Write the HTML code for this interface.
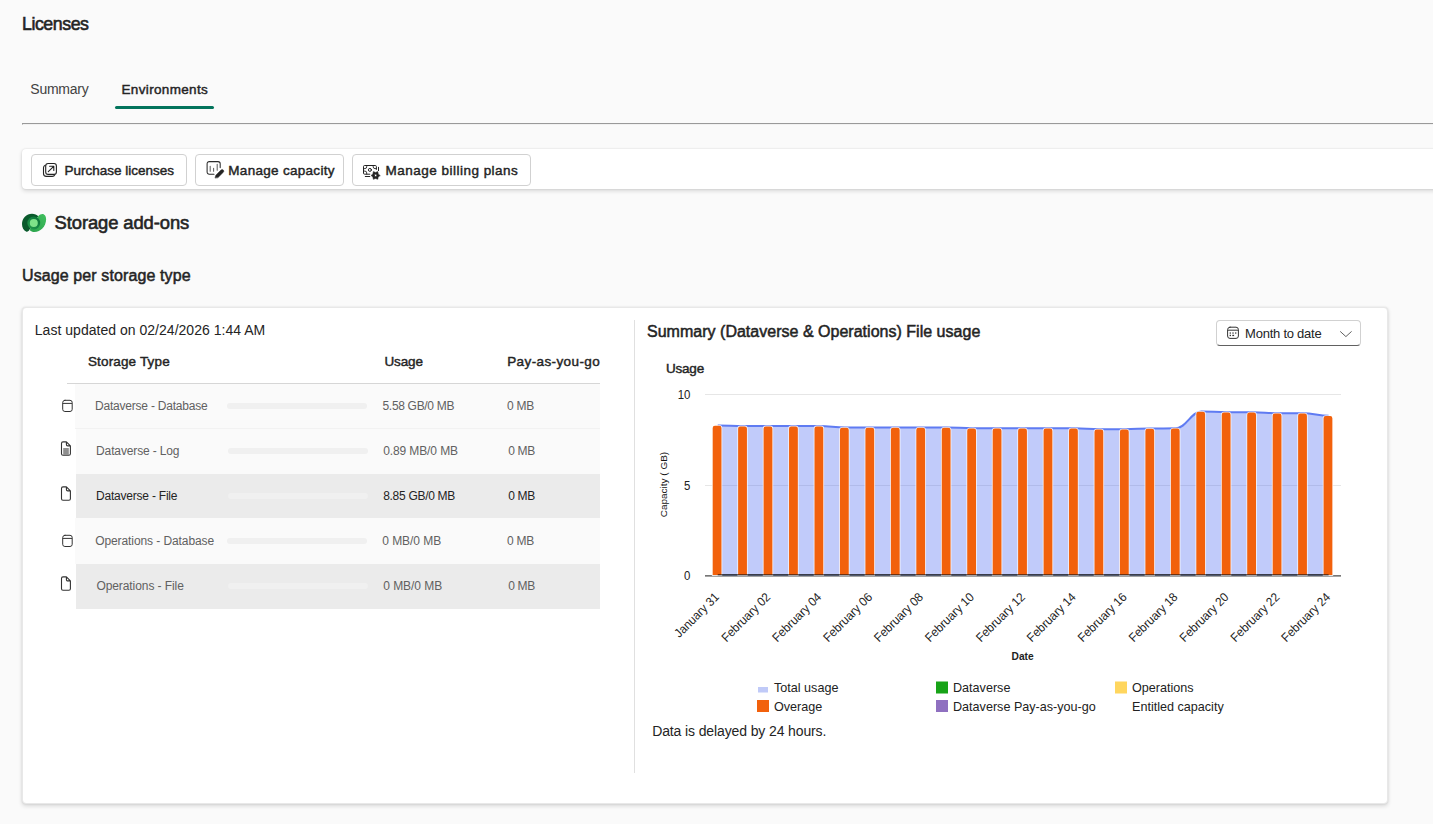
<!DOCTYPE html>
<html lang="en"><head><meta charset="utf-8"><title>Licenses</title>
<style>
html,body{margin:0;padding:0}
body{width:1433px;height:824px;overflow:hidden;background:#fafafa;position:relative;font-family:'Liberation Sans',sans-serif;color:#242424}
.a{position:absolute}
.t{position:absolute;margin:0;padding:0;font-weight:400;white-space:nowrap;transform-origin:0 50%;line-height:normal}
.tabline{left:115px;top:106px;width:99px;height:3px;border-radius:2px;background:#03745c}
.hr{left:22px;top:123px;width:1411px;height:0;border-top:1px solid #999;border-bottom:1px solid #f1f1f1;border-left:1px solid #999}
.toolbar{left:22px;top:149px;width:1420px;height:40px;background:#fff;border-radius:4px;box-shadow:0 0 2px rgba(0,0,0,.12),0 2px 4px rgba(0,0,0,.14)}
.btn{top:154px;height:30px;border:1px solid #d1d1d1;border-radius:4px;background:#fff}
.card{left:22px;top:307px;width:1364px;height:494.5px;border:1px solid #e8e8e8;background:#fff;border-radius:4px;box-shadow:0 0 2px rgba(0,0,0,.10),0 2px 4px rgba(0,0,0,.14)}
.vdiv{left:634px;top:320px;width:1px;height:453px;background:#e0e0e0}
.thline{left:67px;top:383px;width:533px;height:1px;background:#d6d6d6}
.row{height:45px;background:#fafafa}
.row.g{background:#ebebeb}
.pb{width:140px;height:6px;border-radius:3px;background:#f0f0f0}
.dd{left:1216px;top:320px;width:143px;height:24px;border:1px solid #d1d1d1;border-bottom-color:#616161;border-radius:4px;background:#fff}
svg{position:absolute;overflow:visible}
.sb{-webkit-text-stroke:.032em currentColor}

</style></head>
<body>
<div class="a tabline"></div>
<div class="a hr"></div>
<div class="a toolbar"></div>
<div class="a btn" style="left:31px;width:154px"></div>
<div class="a btn" style="left:195px;width:147px"></div>
<div class="a btn" style="left:352px;width:177px"></div>
<div class="a card"></div>
<div class="a vdiv"></div>
<div class="a thline"></div>
<div class="a row" style="left:75px;top:384px;width:525px"></div>
<div class="a row" style="left:76px;top:429px;width:524px"></div>
<div class="a row g" style="left:76px;top:474px;width:524px;height:44px"></div>
<div class="a row" style="left:75px;top:518px;width:525px;height:46px"></div>
<div class="a row g" style="left:76px;top:564px;width:524px;height:44.5px"></div>
<div class="a" style="left:75px;top:428px;width:525px;height:1px;background:#f2f2f2"></div>
<div class="a pb" style="left:227px;top:403px"></div>
<div class="a pb" style="left:228px;top:448px"></div>
<div class="a pb" style="left:228px;top:493px"></div>
<div class="a pb" style="left:227px;top:538px"></div>
<div class="a pb" style="left:228px;top:583px"></div>
<div class="a dd"></div>

<svg class="a" style="left:0;top:0" width="1433" height="824" viewBox="0 0 1433 824" fill="none" stroke-linecap="round" stroke-linejoin="round">
<!-- Dataverse logo -->
<defs>
<linearGradient id="dvr" x1="0" y1="1" x2="1" y2="0"><stop offset="0" stop-color="#27a04d"/><stop offset=".55" stop-color="#148342"/><stop offset="1" stop-color="#0d7037"/></linearGradient>
<linearGradient id="dvl" x1="0" y1="1" x2="1" y2="0"><stop offset="0" stop-color="#2aa24c"/><stop offset="1" stop-color="#40bf5e"/></linearGradient>
</defs>
<g>
<path d="M26.4 231.7C23.6 230.6 22 227.6 22 224C22 218.4 26.4 213.8 32 213.8C34.6 213.8 36.9 214.8 38.4 216.5L36 219L29.6 229.6C28.9 231.1 27.7 232 26.4 231.7Z" fill="#0a5a2c"/>
<path d="M38.6 215.8C39.6 214.6 41 213.9 42.4 213.9C44.6 213.9 46.1 216.2 46.1 219.2C46.1 226.2 40.6 232 34.4 232C32.5 232 30.9 231.4 29.9 230.2L31 226L38.6 215.8Z" fill="url(#dvl)"/>
<circle cx="33.8" cy="223" r="6.4" fill="url(#dvr)"/>
<circle cx="33.8" cy="222.9" r="4" fill="#7fe389"/>
</g>
<!-- Purchase licenses icon -->
<g stroke="#242424" stroke-width="1.1">
<rect x="45.7" y="163.5" width="10.7" height="10.9" rx="2.4"/>
<path d="M45.2 165.2C44.2 165.6 43.5 166.5 43.5 167.7V173.6A2.8 2.8 0 0 0 46.3 176.4H52.3C53.5 176.4 54.4 175.7 54.8 174.7"/>
<path d="M48.3 171.6L53.7 166.3M49.6 166.2H53.8V170.5"/>
</g>
<!-- Manage capacity icon -->
<g stroke="#2b2b2b" stroke-width="1.05">
<path d="M214 174.2H209.3A2.2 2.2 0 0 1 207.1 172V163.8A2.2 2.2 0 0 1 209.3 161.6H218A2.2 2.2 0 0 1 220.2 163.8V167.6"/>
<path d="M210.2 166.3V171.3M213.6 168.3V171.3M217.2 164.3V170.3" stroke="#616161"/>
</g>
<path d="M215.1 177.7L215.8 175.2L221 170A1.6 1.6 0 0 1 223.3 172.3L218.1 177.5Z" fill="#242424" stroke="#242424" stroke-width=".5"/>
<!-- Manage billing plans icon -->
<g stroke="#242424" stroke-width="1">
<path d="M369.8 174.2H364.6A1.1 1.1 0 0 1 363.5 173.1V166.6A1.1 1.1 0 0 1 364.6 165.5H375.3A1.1 1.1 0 0 1 376.4 166.6V169.4"/>
<path d="M366.7 165.6V166.8A1.8 1.8 0 0 1 364.9 168.6H363.6M373.2 165.6V166.8A1.8 1.8 0 0 0 375 168.6H376.3M363.6 171.1H364.9A1.8 1.8 0 0 1 366.7 172.9V174.1" stroke-width=".9"/>
<circle cx="369.9" cy="169.9" r="1.5"/>
<path d="M365.3 176.5H369.8M378.5 167.3V170.6"/>
</g>
<path d="M380.05 175.45L378.19 173.92L377.80 171.55L375.55 172.40L373.30 171.55L372.91 173.92L371.05 175.45L372.91 176.97L373.30 179.35L375.55 178.50L377.80 179.35L378.19 176.97ZM374.40 175.45a1.15 1.15 0 1 0 2.3 0a1.15 1.15 0 1 0 -2.3 0Z" fill="#242424" fill-rule="evenodd" stroke="#242424" stroke-width=".5" stroke-linejoin="round"/>
<!-- row icons -->
<g stroke="#333" stroke-width="1">
<rect x="62.7" y="400.3" width="9.5" height="11.2" rx="2.2"/><path d="M62.9 403.4H72" stroke-linecap="butt"/>
<rect x="62.7" y="535.3" width="9.5" height="11.2" rx="2.2"/><path d="M62.9 538.4H72" stroke-linecap="butt"/>
</g>
<g stroke="#333" stroke-width="1.1">
<path id="doc" d="M66.4 441.9H63A1.5 1.5 0 0 0 61.5 443.4V453.7A1.5 1.5 0 0 0 63 455.2H68.9A1.5 1.5 0 0 0 70.4 453.7V445.9L66.4 441.9V444.6A1.3 1.3 0 0 0 67.7 445.9H70.2"/>
<path d="M66.4 486.9H63A1.5 1.5 0 0 0 61.5 488.4V498.7A1.5 1.5 0 0 0 63 500.2H68.9A1.5 1.5 0 0 0 70.4 498.7V490.9L66.4 486.9V489.6A1.3 1.3 0 0 0 67.7 490.9H70.2"/>
<path d="M66.4 576.9H63A1.5 1.5 0 0 0 61.5 578.4V588.7A1.5 1.5 0 0 0 63 590.2H68.9A1.5 1.5 0 0 0 70.4 588.7V580.9L66.4 576.9V579.6A1.3 1.3 0 0 0 67.7 580.9H70.2"/>
</g>
<rect x="63.2" y="448" width="5.6" height="7" fill="#8f8f8f"/>
<!-- dropdown icons -->
<g stroke="#333" stroke-width="1">
<rect x="1227.6" y="327.2" width="10.8" height="11.2" rx="2.4"/><path d="M1227.8 330.2H1238.2" stroke-linecap="butt"/>
</g>
<g fill="#616161"><rect x="1229.6" y="332.3" width="1.4" height="1.5"/><rect x="1232.3" y="332.3" width="1.4" height="1.5"/><rect x="1235" y="332.3" width="1.4" height="1.5"/><rect x="1229.6" y="334.8" width="1.4" height="1.3" fill="#333"/><rect x="1232.3" y="334.8" width="1.8" height="1.3" fill="#333"/></g>
<path d="M1340.2 331.4L1345.9 336.6L1351.6 331.4" stroke="#616161" stroke-width="1" stroke-linecap="butt" stroke-linejoin="miter"/>
</svg>

<svg class="a" style="left:0;top:0" width="1433" height="824" viewBox="0 0 1433 824" font-family="'Liberation Sans', Arial, sans-serif">
<g stroke="#e6e6e6" stroke-width="1"><path d="M705.0 394.5H1341.0M705.0 485.5H1341.0"/></g>
<path d="M717.73 425.40C727.91 425.40 733.00 426.10 743.18 426.10H768.63H794.09H819.54C829.72 426.10 834.82 427.40 845.00 427.40H870.45H895.90H921.36H946.81C956.99 427.40 962.09 428.30 972.27 428.30H997.72H1023.17H1048.63H1074.08C1084.26 428.30 1089.36 429.20 1099.54 429.20H1124.99C1135.17 429.20 1140.26 428.50 1150.44 428.50C1160.63 428.50 1165.72 428.30 1175.90 428.30C1186.08 428.30 1191.17 411.40 1201.35 411.40C1211.53 411.40 1216.63 412.30 1226.81 412.30H1252.26C1262.44 412.30 1267.53 413.20 1277.72 413.20H1303.17C1313.35 413.20 1318.44 415.70 1328.62 415.70V575.5H717.73Z" fill="#5470f0" fill-opacity=".36"/>
<path d="M717.73 425.40C727.91 425.40 733.00 426.10 743.18 426.10H768.63H794.09H819.54C829.72 426.10 834.82 427.40 845.00 427.40H870.45H895.90H921.36H946.81C956.99 427.40 962.09 428.30 972.27 428.30H997.72H1023.17H1048.63H1074.08C1084.26 428.30 1089.36 429.20 1099.54 429.20H1124.99C1135.17 429.20 1140.26 428.50 1150.44 428.50C1160.63 428.50 1165.72 428.30 1175.90 428.30C1186.08 428.30 1191.17 411.40 1201.35 411.40C1211.53 411.40 1216.63 412.30 1226.81 412.30H1252.26C1262.44 412.30 1267.53 413.20 1277.72 413.20H1303.17C1313.35 413.20 1318.44 415.70 1328.62 415.70" fill="none" stroke="#5f7bf2" stroke-width="2" stroke-linejoin="round"/>
<path d="M705.0 575.9H1341.0" stroke="#4a4a4a" stroke-width="1.1"/>
<path d="M717.73 574.9H1328.62" stroke="#677ea1" stroke-width="1.8"/>
<path d="M712.68 575.1V427.90a2.2 2.2 0 0 1 2.2 -2.2h4.4a2.2 2.2 0 0 1 2.2 2.2V575.1ZM738.13 575.1V428.60a2.2 2.2 0 0 1 2.2 -2.2h4.4a2.2 2.2 0 0 1 2.2 2.2V575.1ZM763.59 575.1V428.60a2.2 2.2 0 0 1 2.2 -2.2h4.4a2.2 2.2 0 0 1 2.2 2.2V575.1ZM789.04 575.1V428.60a2.2 2.2 0 0 1 2.2 -2.2h4.4a2.2 2.2 0 0 1 2.2 2.2V575.1ZM814.49 575.1V428.60a2.2 2.2 0 0 1 2.2 -2.2h4.4a2.2 2.2 0 0 1 2.2 2.2V575.1ZM839.95 575.1V429.90a2.2 2.2 0 0 1 2.2 -2.2h4.4a2.2 2.2 0 0 1 2.2 2.2V575.1ZM865.40 575.1V429.90a2.2 2.2 0 0 1 2.2 -2.2h4.4a2.2 2.2 0 0 1 2.2 2.2V575.1ZM890.86 575.1V429.90a2.2 2.2 0 0 1 2.2 -2.2h4.4a2.2 2.2 0 0 1 2.2 2.2V575.1ZM916.31 575.1V429.90a2.2 2.2 0 0 1 2.2 -2.2h4.4a2.2 2.2 0 0 1 2.2 2.2V575.1ZM941.76 575.1V429.90a2.2 2.2 0 0 1 2.2 -2.2h4.4a2.2 2.2 0 0 1 2.2 2.2V575.1ZM967.22 575.1V430.80a2.2 2.2 0 0 1 2.2 -2.2h4.4a2.2 2.2 0 0 1 2.2 2.2V575.1ZM992.67 575.1V430.80a2.2 2.2 0 0 1 2.2 -2.2h4.4a2.2 2.2 0 0 1 2.2 2.2V575.1ZM1018.12 575.1V430.80a2.2 2.2 0 0 1 2.2 -2.2h4.4a2.2 2.2 0 0 1 2.2 2.2V575.1ZM1043.58 575.1V430.80a2.2 2.2 0 0 1 2.2 -2.2h4.4a2.2 2.2 0 0 1 2.2 2.2V575.1ZM1069.03 575.1V430.80a2.2 2.2 0 0 1 2.2 -2.2h4.4a2.2 2.2 0 0 1 2.2 2.2V575.1ZM1094.49 575.1V431.70a2.2 2.2 0 0 1 2.2 -2.2h4.4a2.2 2.2 0 0 1 2.2 2.2V575.1ZM1119.94 575.1V431.70a2.2 2.2 0 0 1 2.2 -2.2h4.4a2.2 2.2 0 0 1 2.2 2.2V575.1ZM1145.39 575.1V431.00a2.2 2.2 0 0 1 2.2 -2.2h4.4a2.2 2.2 0 0 1 2.2 2.2V575.1ZM1170.85 575.1V430.80a2.2 2.2 0 0 1 2.2 -2.2h4.4a2.2 2.2 0 0 1 2.2 2.2V575.1ZM1196.30 575.1V413.90a2.2 2.2 0 0 1 2.2 -2.2h4.4a2.2 2.2 0 0 1 2.2 2.2V575.1ZM1221.76 575.1V414.80a2.2 2.2 0 0 1 2.2 -2.2h4.4a2.2 2.2 0 0 1 2.2 2.2V575.1ZM1247.21 575.1V414.80a2.2 2.2 0 0 1 2.2 -2.2h4.4a2.2 2.2 0 0 1 2.2 2.2V575.1ZM1272.67 575.1V415.70a2.2 2.2 0 0 1 2.2 -2.2h4.4a2.2 2.2 0 0 1 2.2 2.2V575.1ZM1298.12 575.1V415.70a2.2 2.2 0 0 1 2.2 -2.2h4.4a2.2 2.2 0 0 1 2.2 2.2V575.1ZM1323.57 575.1V418.20a2.2 2.2 0 0 1 2.2 -2.2h4.4a2.2 2.2 0 0 1 2.2 2.2V575.1Z" fill="#f2610c" stroke="#fff" stroke-opacity=".8" stroke-width="1.6" paint-order="stroke"/>
<path d="M717.73 574.7H1328.62" stroke="#1c1010" stroke-opacity=".6" stroke-width="1.5"/>
<g font-size="13" fill="#222" text-anchor="end">
<text transform="translate(690.4 399.2) scale(.88 1)">10</text>
<text transform="translate(690.4 489.7) scale(.88 1)">5</text>
<text transform="translate(690.4 580.2) scale(.88 1)">0</text>
</g>
<text transform="translate(667.3 484.6) rotate(-90) scale(1 .93)" text-anchor="middle" font-size="10" fill="#151515">Capacity ( GB)</text>
<g font-size="12.4" fill="#222" text-anchor="end">
<text transform="translate(719.83 597.8) rotate(-45) scale(0.935 1)">January 31</text>
<text transform="translate(771.24 597.8) rotate(-45) scale(0.95 1)">February 02</text>
<text transform="translate(822.14 597.8) rotate(-45) scale(0.95 1)">February 04</text>
<text transform="translate(873.05 597.8) rotate(-45) scale(0.95 1)">February 06</text>
<text transform="translate(923.96 597.8) rotate(-45) scale(0.95 1)">February 08</text>
<text transform="translate(974.87 597.8) rotate(-45) scale(0.95 1)">February 10</text>
<text transform="translate(1025.77 597.8) rotate(-45) scale(0.95 1)">February 12</text>
<text transform="translate(1076.68 597.8) rotate(-45) scale(0.95 1)">February 14</text>
<text transform="translate(1127.59 597.8) rotate(-45) scale(0.95 1)">February 16</text>
<text transform="translate(1178.50 597.8) rotate(-45) scale(0.95 1)">February 18</text>
<text transform="translate(1229.41 597.8) rotate(-45) scale(0.95 1)">February 20</text>
<text transform="translate(1280.32 597.8) rotate(-45) scale(0.95 1)">February 22</text>
<text transform="translate(1331.22 597.8) rotate(-45) scale(0.95 1)">February 24</text>
</g>
<text x="1022.6" y="660.3" text-anchor="middle" font-size="10.2" font-weight="bold" fill="#222">Date</text>
<rect x="758" y="687" width="10" height="5.5" fill="#c0caf8"/>
<rect x="757" y="700" width="12" height="12" fill="#f2610c"/>
<rect x="936" y="681.5" width="12" height="12" fill="#17a317"/>
<rect x="936" y="700" width="12" height="12" fill="#8f70c0"/>
<rect x="1115" y="681.5" width="12" height="12" fill="#ffd65e"/>
<g font-size="13.4" fill="#222">
<text transform="translate(774 692) scale(.94 1)">Total usage</text>
<text transform="translate(774 711) scale(.94 1)">Overage</text>
<text transform="translate(953 692) scale(.94 1)">Dataverse</text>
<text transform="translate(953 711) scale(.94 1)">Dataverse Pay-as-you-go</text>
<text transform="translate(1132 692) scale(.94 1)">Operations</text>
<text transform="translate(1132 711) scale(.94 1)">Entitled capacity</text>
</g>
</svg>
<h1 class="t sb" style="left:21.6px;top:13px;font-size:19px;letter-spacing:-0.475px;transform:scaleX(0.9345);">Licenses</h1>
<div class="t" style="left:30.3px;top:81px;font-size:14px;color:#424242;letter-spacing:-0.250px;">Summary</div>
<div class="t sb" style="left:121.5px;top:82px;font-size:13.5px;letter-spacing:0.341px;">Environments</div>
<div class="t sb" style="left:64.5px;top:163px;font-size:13.5px;letter-spacing:-0.009px;">Purchase licenses</div>
<div class="t sb" style="left:228.3px;top:163px;font-size:13.5px;letter-spacing:0.296px;">Manage capacity</div>
<div class="t sb" style="left:385.6px;top:163px;font-size:13.5px;letter-spacing:0.482px;">Manage billing plans</div>
<h2 class="t sb" style="left:54.6px;top:212px;font-size:18.4px;letter-spacing:-0.096px;">Storage add-ons</h2>
<h3 class="t sb" style="left:22.0px;top:267px;font-size:16px;letter-spacing:0.107px;">Usage per storage type</h3>
<div class="t" style="left:34.8px;top:322px;font-size:14px;letter-spacing:0.024px;">Last updated on 02/24/2026 1:44 AM</div>
<div class="t sb" style="left:87.9px;top:354px;font-size:13.5px;letter-spacing:0.159px;">Storage Type</div>
<div class="t sb" style="left:384.4px;top:354px;font-size:13.5px;letter-spacing:-0.113px;">Usage</div>
<div class="t sb" style="left:507.2px;top:354px;font-size:13.5px;letter-spacing:0.392px;">Pay-as-you-go</div>
<div class="t" style="left:95.0px;top:399px;font-size:12px;color:#616161;letter-spacing:-0.213px;">Dataverse - Database</div>
<div class="t" style="left:382.5px;top:399px;font-size:12px;color:#616161;letter-spacing:-0.314px;">5.58 GB/0 MB</div>
<div class="t" style="left:507.1px;top:399px;font-size:12px;color:#616161;letter-spacing:-0.267px;">0 MB</div>
<div class="t" style="left:96.1px;top:444px;font-size:12px;color:#616161;letter-spacing:-0.139px;">Dataverse - Log</div>
<div class="t" style="left:383.2px;top:444px;font-size:12px;color:#616161;letter-spacing:-0.109px;">0.89 MB/0 MB</div>
<div class="t" style="left:508.2px;top:444px;font-size:12px;color:#616161;letter-spacing:-0.333px;">0 MB</div>
<div class="t" style="left:96.1px;top:489px;font-size:12px;letter-spacing:-0.223px;">Dataverse - File</div>
<div class="t" style="left:383.2px;top:489px;font-size:12px;letter-spacing:-0.295px;">8.85 GB/0 MB</div>
<div class="t" style="left:508.2px;top:489px;font-size:12px;letter-spacing:-0.333px;">0 MB</div>
<div class="t" style="left:95.2px;top:534px;font-size:12px;color:#616161;letter-spacing:-0.088px;">Operations - Database</div>
<div class="t" style="left:382.2px;top:534px;font-size:12px;color:#616161;letter-spacing:-0.031px;">0 MB/0 MB</div>
<div class="t" style="left:507.1px;top:534px;font-size:12px;color:#616161;letter-spacing:-0.267px;">0 MB</div>
<div class="t" style="left:96.4px;top:579px;font-size:12px;color:#616161;letter-spacing:-0.078px;">Operations - File</div>
<div class="t" style="left:383.2px;top:579px;font-size:12px;color:#616161;letter-spacing:-0.031px;">0 MB/0 MB</div>
<div class="t" style="left:508.2px;top:579px;font-size:12px;color:#616161;letter-spacing:-0.333px;">0 MB</div>
<h3 class="t sb" style="left:647.0px;top:323px;font-size:16px;letter-spacing:0.017px;">Summary (Dataverse &amp; Operations) File usage</h3>
<div class="t" style="left:1245.1px;top:326px;font-size:13px;letter-spacing:-0.242px;">Month to date</div>
<div class="t sb" style="left:665.9px;top:361px;font-size:13.5px;letter-spacing:-0.187px;">Usage</div>
<div class="t" style="left:652.2px;top:723px;font-size:14px;letter-spacing:-0.120px;">Data is delayed by 24 hours.</div>
</body></html>
